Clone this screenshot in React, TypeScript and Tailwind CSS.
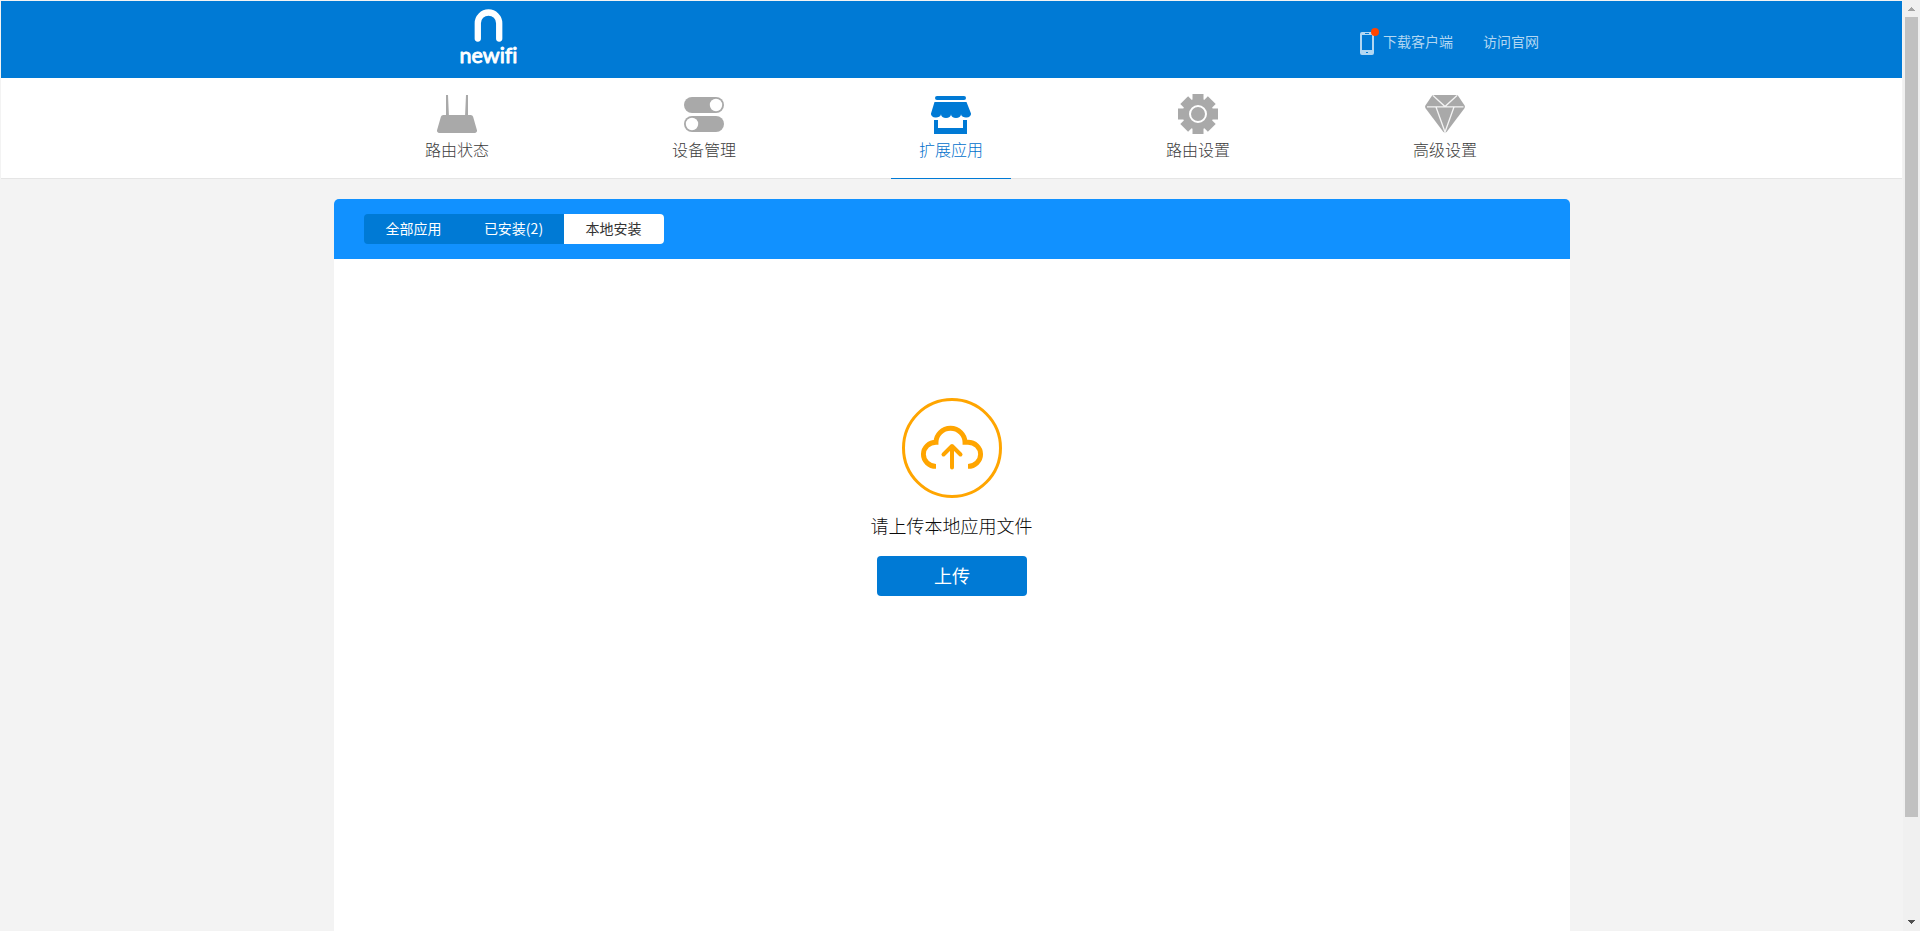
import type { ReactNode } from 'react';

function RouterIcon() {
  return (
    <svg width="40" height="40" viewBox="0 0 40 40" className="block" fill="#a9a9a9">
      <path d="M9 1h2l.9 20H9zM29 1h2v20h-2.900z" />
      <path d="M6.300 21h27.400a2.500 2.500 0 0 1 2.400 1.800l3.800 13.200a2.300 2.300 0 0 1-2.200 3H2.300a2.300 2.300 0 0 1-2.200-3L3.900 22.800A2.500 2.500 0 0 1 6.300 21z" />
    </svg>
  );
}

function DevicesIcon() {
  return (
    <svg width="40" height="40" viewBox="0 0 40 40" className="block">
      <rect x="0" y="3" width="40" height="16" rx="8" fill="#a9a9a9" />
      <rect x="0" y="22" width="40" height="16" rx="8" fill="#a9a9a9" />
      <circle cx="32" cy="11" r="6.200" fill="#fff" />
      <circle cx="8" cy="30" r="6.200" fill="#fff" />
    </svg>
  );
}

function StoreIcon() {
  return (
    <svg width="40" height="40" viewBox="0 0 40 40" className="block" fill="#007ad5">
      <rect x="4" y="2" width="31" height="4" rx="2" />
      <path d="M3.500 8h32l4.500 11.500a5 3.700 0 0 1-10 .8 5 3.700 0 0 1-10 0 5 3.700 0 0 1-10 0 5 3.700 0 0 1-10-.8z" />
      <path d="M3 26h4v8h25v-8h4v14H3z" />
    </svg>
  );
}

function GearIcon() {
  return (
    <svg width="40" height="40" viewBox="0 0 40 40" className="block" fill="#a9a9a9">
      <circle cx="20" cy="20" r="15.500" />
      <rect x="14.500" y="0" width="11" height="40" />
      <rect x="0" y="14.500" width="40" height="11" />
      <rect x="14.500" y="0.500" width="11" height="39" transform="rotate(45 20 20)" />
      <rect x="14.500" y="0.500" width="11" height="39" transform="rotate(-45 20 20)" />
      <circle cx="20" cy="20" r="8" fill="none" stroke="#fff" strokeWidth="2" />
    </svg>
  );
}

function DiamondIcon() {
  return (
    <svg width="40" height="40" viewBox="0 0 40 40" className="block">
      <path
        d="M8.500 1h23a2 2 0 0 1 1.500.7l6.500 9.500a3 3 0 0 1-.2 3.200L22 37.500a2.500 2.500 0 0 1-4 0L.7 14.400a3 3 0 0 1-.2-3.200L7 1.700A2 2 0 0 1 8.500 1z"
        fill="#a9a9a9"
      />
      <path
        d="M2 12.800h36.500M8 1.500l12 11 12-11M11 13l9 25 9-25"
        fill="none"
        stroke="#f4f4f4"
        strokeWidth="1.300"
      />
    </svg>
  );
}

function Logo() {
  return (
    <svg width="64" height="72" viewBox="0 0 64 72" className="block overflow-visible" role="img" aria-label="newifi">
      <path
        d="M18.800 33.500V18.200a10.700 10.700 0 0 1 21.400 0v15.300"
        fill="none"
        stroke="#fff"
        strokeWidth="6.300"
        strokeLinecap="round"
      />
      <text
        x="0.500"
        y="57.500"
        textLength="58"
        lengthAdjust="spacingAndGlyphs"
        fill="#fff"
        stroke="#fff"
        strokeWidth="0.900"
        strokeLinejoin="round"
        className="font-['Lato',sans-serif] text-[22px] font-normal [font-variant-ligatures:none]"
      >
        newifi
      </text>
    </svg>
  );
}

function PhoneIcon() {
  return (
    <svg width="20" height="28" viewBox="0 0 20 28" className="block">
      <path
        fillRule="evenodd"
        d="M2 4h10a2 2 0 0 1 2 2v19a2 2 0 0 1-2 2H2a2 2 0 0 1-2-2V6a2 2 0 0 1 2-2zM2 7v15h10V7zM5 5v1h4V5zM6 24v1h2v-1z"
        fill="#b2d7f2"
      />
      <circle cx="15" cy="4" r="4" fill="#ff4500" />
    </svg>
  );
}

function UploadIcon() {
  return (
    <svg width="100" height="100" viewBox="0 0 100 100" className="block" fill="none" stroke="#ffa500">
      <circle cx="50" cy="50" r="48.500" strokeWidth="3" />
      <path
        d="M34 68.400A12.600 12.050 0 0 1 34 44.300H34A14.500 14 0 0 1 63 44.300H66A12.600 12.050 0 0 1 66 68.400"
        strokeWidth="4.900"
      />
      <path d="M50 69.500V48.500M41.500 56.500L50 48l8.500 8.500" strokeWidth="4" strokeLinecap="round" strokeLinejoin="round" />
    </svg>
  );
}

const navItems: { label: string; icon: ReactNode; active?: boolean }[] = [
  { label: '路由状态', icon: <RouterIcon /> },
  { label: '设备管理', icon: <DevicesIcon /> },
  { label: '扩展应用', icon: <StoreIcon />, active: true },
  { label: '路由设置', icon: <GearIcon /> },
  { label: '高级设置', icon: <DiamondIcon /> },
];

const tabs = [
  { label: '全部应用' },
  { label: '已安装(2)' },
  { label: '本地安装', active: true },
];

function Header() {
  return (
    <header className="flex h-[77px] bg-[#007ad5]">
      <div className="ml-[458px] mt-[4px] w-[60px]">
        <Logo />
      </div>
      <div className="ml-[841px] mt-[27px] flex h-[28px] text-[14px] leading-[26px] text-[#b2d7f2]">
        <a className="flex">
          <PhoneIcon />
          <span className="ml-[3px]">下载客户端</span>
        </a>
        <a className="ml-[30px]">访问官网</a>
      </div>
    </header>
  );
}

function Nav() {
  return (
    <nav className="h-[101px] border-b border-[#e5e5e5] bg-white pl-[332.5px]">
      <ul className="flex">
        {navItems.map((item) => (
          <li key={item.label} className="flex w-[247px] justify-center">
            <div
              className={
                item.active
                  ? 'flex h-[101px] w-[120px] flex-col items-center border-b border-[#007ad5] pt-[16px] text-[#006fcb]'
                  : 'flex h-[101px] w-[120px] flex-col items-center pt-[16px] text-[#3c3c3c]'
              }
            >
              {item.icon}
              <span className="mt-[3px] text-[16px] font-light leading-[24px]">{item.label}</span>
            </div>
          </li>
        ))}
      </ul>
    </nav>
  );
}

function Scrollbar() {
  return (
    <div className="flex w-[17px] flex-col items-center bg-[#f0f0f0]">
      <svg width="17" height="17" viewBox="0 0 17 17" className="block" shapeRendering="crispEdges">
        <path d="M8 7h1v1h1v1h1v1h1v1H5v-1h1V9h1V8h1z" fill="#a3a3a3" />
      </svg>
      <div className="h-[800px] w-[13px] bg-[#c1c1c1]" />
      <svg width="17" height="17" viewBox="0 0 17 17" className="mt-auto block" shapeRendering="crispEdges">
        <path d="M5 6h7v1h-1v1h-1v1H9v1H8V9H7V8H6V7H5z" fill="#505050" />
      </svg>
    </div>
  );
}

export default function App() {
  return (
    <div className="flex h-[931px] w-[1920px] overflow-hidden bg-[#f3f3f3] font-['Noto_Sans_CJK_SC',sans-serif] font-normal">
      <div className="flex-1 px-px pt-px">
        <Header />
        <Nav />
        <main className="ml-[333px] mt-[20px] h-[760px] w-[1236px] overflow-hidden rounded-t-[5px] bg-white">
          <div className="h-[60px] bg-[#1191ff] px-[30px] pt-[15px]">
            <div className="flex h-[30px] w-[300px] overflow-hidden rounded-[4px] bg-[#007ad5] text-center text-[14px] leading-[28px] text-white">
              {tabs.map((tab) => (
                <button
                  key={tab.label}
                  className={tab.active ? 'w-[100px] bg-white pr-px pb-[2px] text-[#333]' : 'w-[100px] pr-px pb-[2px]'}
                >
                  {tab.label}
                </button>
              ))}
            </div>
          </div>
          <div className="flex flex-col items-center pt-[139px]">
            <UploadIcon />
            <p className="mt-[13px] pr-px text-[18px] font-light leading-[28px] text-[#0a0a0a]">请上传本地应用文件</p>
            <button className="mt-[17px] h-[40px] w-[150px] rounded-[4px] bg-[#007ad5] pb-px text-[18px] font-normal leading-[39px] text-white">
              上传
            </button>
          </div>
        </main>
      </div>
      <Scrollbar />
    </div>
  );
}
